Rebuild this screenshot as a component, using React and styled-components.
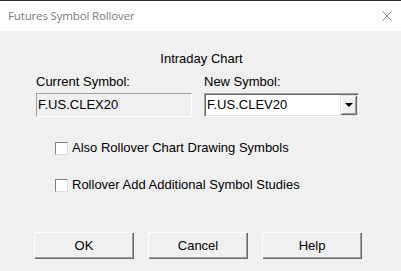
import React from 'react';
import styled, { createGlobalStyle } from 'styled-components';

const GlobalStyle = createGlobalStyle`
html, body {
    margin: 0;
    padding: 0;
    background: #f0f0f0;
}
* {
    box-sizing: border-box;
}
`;

const App = () => {
    return (
        <Window>
            <GlobalStyle />

            <TitleBar>
                <Title>Futures Symbol Rollover</Title>
                <CloseIcon viewBox="0 0 10 10">
                    <path d="M0.5 0.5 L9.5 9.5 M9.5 0.5 L0.5 9.5" />
                </CloseIcon>
            </TitleBar>

            <Body>
                <Heading>Intraday Chart</Heading>

                <Fields>
                    <Field>
                        <Label>Current Symbol:</Label>
                        <ReadOnlyBox>F.US.CLEX20</ReadOnlyBox>
                    </Field>
                    <Field>
                        <Label>New Symbol:</Label>
                        <Combo>
                            <ComboText>F.US.CLEV20</ComboText>
                            <ComboButton>
                                <Arrow />
                            </ComboButton>
                        </Combo>
                    </Field>
                </Fields>

                <Options>
                    <Option>
                        <CheckBox />
                        Also Rollover Chart Drawing Symbols
                    </Option>
                    <Option>
                        <CheckBox />
                        Rollover Add Additional Symbol Studies
                    </Option>
                </Options>

                <Buttons>
                    <Button>OK</Button>
                    <Button>Cancel</Button>
                    <Button>Help</Button>
                </Buttons>
            </Body>
        </Window>
    );
};

export default App;




const Window = styled.div`
width: 401px;
height: 271px;
display: flex;
flex-direction: column;
background: #f0f0f0;
font-family: "Liberation Sans", Arial, sans-serif;
font-size: 13px;
color: #000;
overflow: hidden;
`;

const TitleBar = styled.div`
height: 31px;
display: flex;
align-items: center;
justify-content: space-between;
background: #fff;
border-top: 1px solid #2b2b2b;
padding: 0 9px 0 8px;
`;

const Title = styled.div`
font-family: "Open Sans", "Noto Sans", sans-serif;
font-size: 11.5px;
color: #7a7a7a;
letter-spacing: -0.15px;
margin-top: -1px;
`;

const CloseIcon = styled.svg`
width: 10px;
height: 10px;
margin-top: -1px;
fill: none;
stroke: #8a8a8a;
stroke-width: 1;
`;

const Body = styled.div`
flex: 1;
display: flex;
flex-direction: column;
padding: 20px 0 0 0;
`;

const Heading = styled.div`
line-height: 15px;
text-align: center;
padding-left: 2px;
`;

const Fields = styled.div`
display: flex;
gap: 12px;
padding-left: 36px;
margin-top: 8px;
`;

const Field = styled.div`
display: flex;
flex-direction: column;
gap: 4px;
`;

const Label = styled.div`
line-height: 15px;
`;

const ReadOnlyBox = styled.div`
width: 156px;
height: 24px;
border-top: 1px solid #a0a0a0;
border-left: 1px solid #a0a0a0;
border-right: 1px solid #fff;
border-bottom: 1px solid #fff;
padding: 3px 0 0 1px;
line-height: 15px;
`;

const Combo = styled.div`
width: 155px;
height: 24px;
display: flex;
align-items: stretch;
background: #fff;
border-top: 1px solid #a0a0a0;
border-left: 1px solid #a0a0a0;
border-right: 1px solid #fff;
border-bottom: 1px solid #fff;
box-shadow: inset 1px 1px 0 #696969, inset -1px -1px 0 #e3e3e3;
padding: 1px;
`;

const ComboText = styled.div`
flex: 1;
padding: 2px 0 0 1px;
line-height: 15px;
`;

const ComboButton = styled.div`
width: 17px;
display: flex;
align-items: center;
justify-content: center;
background: #f0f0f0;
box-shadow: inset 1px 1px 0 #e3e3e3, inset -1px -1px 0 #696969, inset 2px 2px 0 #fff, inset -2px -2px 0 #a0a0a0;
`;

const Arrow = styled.div`
width: 0;
height: 0;
border-left: 4px solid transparent;
border-right: 4px solid transparent;
border-top: 4px solid #000;
margin-left: 1px;
`;

const Options = styled.div`
display: flex;
flex-direction: column;
gap: 22px;
padding-left: 55px;
margin-top: 23px;
`;

const Option = styled.label`
display: flex;
align-items: center;
gap: 4px;
line-height: 15px;
`;

const CheckBox = styled.span`
width: 13px;
height: 13px;
background: #fff;
border-top: 1px solid #808080;
border-left: 1px solid #808080;
border-right: 1px solid #dcdcdc;
border-bottom: 1px solid #dcdcdc;
margin-top: 2px;
`;

const Buttons = styled.div`
display: flex;
gap: 14px;
padding-left: 34px;
margin-top: 40px;
`;

const Button = styled.button`
width: 100px;
height: 27px;
background: #f0f0f0;
border: none;
border-radius: 0;
padding: 0;
font-family: "Liberation Sans", Arial, sans-serif;
font-size: 13px;
color: #000;
box-shadow: inset 1px 1px 0 #fff, inset -1px -1px 0 #696969, inset -2px -2px 0 #a0a0a0;
`;
